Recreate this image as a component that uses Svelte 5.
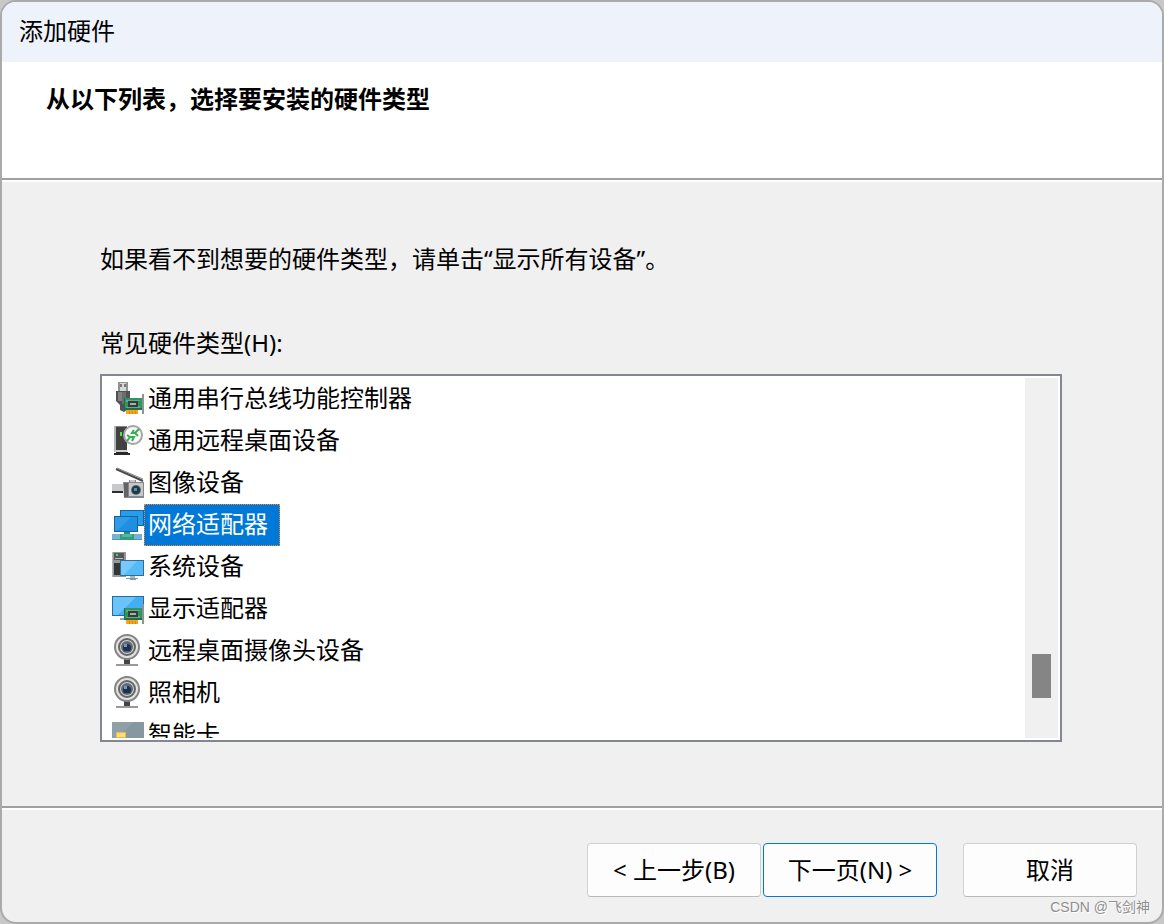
<script>
	const devices = [
		{ icon: 'usb', name: '通用串行总线功能控制器' },
		{ icon: 'remote', name: '通用远程桌面设备' },
		{ icon: 'imaging', name: '图像设备' },
		{ icon: 'network', name: '网络适配器' },
		{ icon: 'system', name: '系统设备' },
		{ icon: 'display', name: '显示适配器' },
		{ icon: 'camera', name: '远程桌面摄像头设备' },
		{ icon: 'camera', name: '照相机' },
		{ icon: 'smartcard', name: '智能卡' }
	];

	let selected = $state(3);
</script>

{#snippet card()}
	<path fill="#8f9394" d="M30 12h2v20h-2z" />
	<path fill="#2e9563" d="M12 16h18v12H12z" />
	<path fill="#1d7149" d="M12 26h18v2H12zM12 16h1v12h-1z" />
	<path fill="#68a98a" d="M14 18h14v1H14zM14 25h14v1H14zM14 18h2v2h-2zM26 24h2v2h-2z" />
	<path fill="#383d3b" d="M16 19h10v6H16z" />
	<path fill="#9db5a9" d="M18 21h6v2h-6z" />
	<path fill="#f6a51c" d="M14 28h12v4H14z" />
	<path fill="#dc8510" d="M17 29h1v3h-1zM20 29h1v3h-1zM23 29h1v3h-1z" />
{/snippet}

{#snippet deviceIcon(kind)}
	<svg class="icon" viewBox="0 0 32 32" aria-hidden="true">
		{#if kind === 'usb'}
			<path fill="#929292" d="M6 0h10v9H6z" />
			<path fill="#d9d9d9" d="M8 1h6v8H8z" />
			<path fill="#777" d="M8 2h2v3H8zM12 2h2v3h-2z" />
			<path fill="#505254" d="M4 9h14v10l-3 4v5l-3 2-4-2v-5l-4-4z" />
			<path fill="#808284" d="M6 10h4v9H6z" />
			<path fill="#6b6d6f" d="M10 10h4v12h-4z" />
			{@render card()}
		{:else if kind === 'remote'}
			<path fill="#b5b5b5" d="M2 2h2v26H2z" />
			<path fill="#414141" d="M4 2h11v26H4z" />
			<path fill="#858585" d="M4 2h11v1H4z" />
			<path fill="#d0d0d0" d="M3 26h12v2H3z" />
			<path fill="#292929" d="M4 28h12v1H4zM2 29h16v2H2z" />
			<path fill="#45ec45" d="M8 8h2v4H8z" />
			<circle cx="21" cy="11" r="9" fill="#f7f7f7" stroke="#a4a4a4" stroke-width="2" />
			<path fill="none" stroke="#36ad55" stroke-width="2" d="M15 11l3 2-3 4M18 13h4l-2 4M27 5l-4 4 3 3M23 9h-3l2-3" />
		{:else if kind === 'imaging'}
			<path fill="none" stroke="#4b4b4b" stroke-width="2" d="M4 3l27 12" />
			<path fill="none" stroke="#858585" d="M5 2l26 11" />
			<path fill="#c7c9ca" d="M0 18h11v7H0z" />
			<path fill="#2e2e2e" d="M0 25h11v2H0z" />
			<path fill="#858789" d="M11 16h6v-2h7v2h8v16H12z" />
			<path fill="#626466" d="M12 17h4v14h-4z" />
			<path fill="#c6c8c9" d="M17 17h14v13H17zM18 14h5v2h-5z" />
			<circle cx="24" cy="24" r="5" fill="#606a70" />
			<circle cx="24" cy="24" r="4" fill="#1e3743" />
			<path fill="#4f93ad" d="M22 22h3v3h-3z" />
		{:else if kind === 'network'}
			<path fill="#1663a3" d="M8 2h24v16H8z" />
			<path fill="#259de8" d="M9 3h22v14H9z" />
			<path fill="#15639f" d="M2 8h24v16H2z" />
			<path fill="#1f8fdf" d="M3 9h22v14H3z" />
			<path fill="#40aaf0" d="M3 9h16L6 22H3z" opacity=".5" />
			<path fill="#37877e" d="M12 24h6v3h-6z" />
			<path fill="#76b2d2" d="M0 26h30v6H0z" />
			<path fill="#5593b7" d="M0 31h30v1H0z" />
			<path fill="#309d7c" d="M8 26h14v6H8z" />
			<path fill="#54b99b" d="M10 26h10v3H10z" />
		{:else if kind === 'system'}
			<path fill="#96999b" d="M0 2h14v25H0z" />
			<path fill="#55585a" d="M2 3h10v7H2z" />
			<path fill="#333638" d="M2 13h8v12H2z" />
			<path fill="#35e93b" d="M4 4h2v2H4z" />
			<path fill="#b6babd" d="M3 8h8v1H3zM0 2h1v25H0z" />
			<path fill="#346d94" d="M8 10h24v16H8z" />
			<path fill="#55baf8" d="M9 11h22v14H9z" />
			<path fill="#8dd4ff" d="M9 11h16L12 25H9z" opacity=".6" />
			<path fill="#a5b7c8" d="M18 26h5v2h-5z" />
			<path fill="#8798ab" d="M14 28h12v1H14zM18 29h6v1h-6z" />
		{:else if kind === 'display'}
			<path fill="#286d99" d="M0 4h32v20H0z" />
			<path fill="#43aef1" d="M1 5h30v18H1z" />
			<path fill="#80d0ff" d="M1 5h23L6 23H1z" opacity=".65" />
			<path fill="#91a5b8" d="M8 26h8v2H8z" />
			{@render card()}
		{:else if kind === 'camera'}
			<path fill="#444" d="M12 25h6v5h-6z" />
			<path fill="#999" d="M4 30h22v2H4z" />
			<circle cx="15" cy="13" r="12" fill="#e2e2e2" stroke="#858585" stroke-width="2" />
			<circle cx="15" cy="13" r="8" fill="#d0d0d0" stroke="#666" stroke-width="2" />
			<circle cx="15" cy="13" r="6" fill="#606975" />
			<circle cx="15" cy="14" r="4" fill="#1f3048" />
			<path fill="#7197bc" d="M12 10h3v3h-3z" />
			<path fill="#39689a" d="M13 17h5v1h-5z" />
		{:else}
			<path fill="#85979f" d="M0 4h32v24H0z" />
			<path fill="#a1afb5" d="M0 4h22L0 24z" opacity=".4" />
			<path fill="#efb947" d="M4 14h10v10H4z" />
			<path fill="#ffdc80" d="M5 15h8v4H5z" />
		{/if}
	</svg>
{/snippet}

<main class="wizard">
	<div class="title-bar">添加硬件</div>

	<header>
		<h1>从以下列表，选择要安装的硬件类型</h1>
	</header>

	<section class="content">
		<p>如果看不到想要的硬件类型，请单击“显示所有设备”。</p>
		<h2 id="type-label">常见硬件类型(H):</h2>

		<div class="list-frame">
			<div class="list" role="listbox" aria-labelledby="type-label">
				{#each devices as device, i}
					<button
						class="device"
						class:selected={selected === i}
						role="option"
						aria-selected={selected === i}
						onclick={() => (selected = i)}
					>
						{@render deviceIcon(device.icon)}
						<span>{device.name}</span>
					</button>
				{/each}
			</div>
			<div class="track" aria-hidden="true">
				<div class="thumb"></div>
			</div>
		</div>
	</section>

	<footer>
		<button>&lt; 上一步(B)</button>
		<button class="primary">下一页(N) &gt;</button>
		<button class="cancel">取消</button>
	</footer>

	<span class="watermark">CSDN @飞剑神</span>
</main>

<style>
	:global(body) {
		background: #c8c8c8;
	}

	.wizard {
		position: relative;
		display: flex;
		flex-direction: column;
		min-height: 100vh;
		box-sizing: border-box;
		border: 2px solid #aaa;
		border-radius: 16px;
		overflow: hidden;
		background: #f0f0f0;
		color: #000;
		font-family: "Noto Sans", "Noto Sans CJK SC", sans-serif;
		font-size: 24px;
		line-height: 36px;
	}

	.title-bar {
		padding: 11px 17px 13px;
		background: #eef3fb;
	}

	header {
		min-height: 78px;
		padding: 19px 44px;
		background: #fff;
		border-bottom: 2px solid #a0a0a0;
		box-shadow: 0 2px #fff;
	}

	h1,
	h2,
	p {
		margin: 0;
		font-size: 24px;
		font-weight: 400;
	}

	h1 {
		font-weight: 700;
	}

	.content {
		flex: 1;
		display: flex;
		flex-direction: column;
		padding: 61px 100px 64px 98px;
	}

	h2 {
		margin: 48px 0 13px;
	}

	.list-frame {
		display: flex;
		height: 360px;
		padding: 2px;
		border: 2px solid #828790;
		background: #fff;
	}

	.list {
		flex: 1;
		padding-left: 8px;
		overflow: hidden;
	}

	button {
		font: inherit;
		color: inherit;
	}

	.device {
		display: flex;
		width: 100%;
		height: 42px;
		padding: 0;
		border: 0;
		background: none;
		text-align: left;
	}

	.icon {
		flex: none;
		width: 32px;
		height: 32px;
		margin-top: 4px;
	}

	.device span {
		box-sizing: border-box;
		height: 42px;
		padding: 1px 11px 3px 3px;
		border: 1px solid transparent;
	}

	.selected span {
		border: 1px dotted #ff8728;
		background: #0078d7;
		color: #fff;
	}

	.track {
		width: 33px;
		background: #f0f0f0;
	}

	.thumb {
		width: 19px;
		height: 44px;
		margin: 276px 7px 0;
		background: #858585;
	}

	footer {
		display: flex;
		justify-content: flex-end;
		gap: 2px;
		padding: 35px 25px 25px;
		border-top: 2px solid #a0a0a0;
		box-shadow: inset 0 2px #fff;
	}

	footer button {
		width: 174px;
		height: 54px;
		padding: 0;
		border: 1px solid #d0d0d0;
		border-bottom-color: #bababa;
		border-radius: 4px;
		background: #fdfdfd;
	}

	footer .primary {
		border-color: #0078d4;
	}

	footer .cancel {
		margin-left: 24px;
	}

	.watermark {
		position: absolute;
		right: 12px;
		bottom: 4px;
		color: #8e8e8e;
		font-family: "Liberation Sans", "Noto Sans CJK SC", sans-serif;
		font-size: 14px;
		line-height: 22px;
		text-shadow: 1px 1px #fff;
	}
</style>
